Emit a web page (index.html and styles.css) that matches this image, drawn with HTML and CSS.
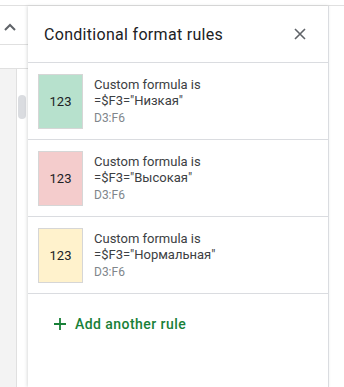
FILE: index.html
```html
<!DOCTYPE html>
<html>
<head>
	<meta charset="utf-8">
	<link rel="stylesheet" href="styles.css">
</head>
<body>

	<div class="topbar"></div>

	<div class="main">
		<div class="gutter">
			<div class="gutter-head">
				<svg class="chevron" width="12" height="8" viewBox="0 0 12 8">
					<path d="M1 7L6 2l5 5" fill="none" stroke="#5f6368" stroke-width="2"/>
				</svg>
			</div>
			<div class="gutter-row"></div>
			<div class="gutter-body">
				<div class="cells"></div>
				<div class="scrollarea"><div class="thumb"></div></div>
			</div>
		</div>

		<div class="panel">
			<div class="panel-head">
				<span class="title">Conditional format rules</span>
				<svg class="close" width="12" height="12" viewBox="0 0 12 12">
					<path d="M1 1l10 10M11 1L1 11" stroke="#5f6368" stroke-width="1.6"/>
				</svg>
			</div>

			<div class="rule">
				<div class="swatch green">123</div>
				<div class="rule-text">
					<div class="formula">Custom formula is</div>
					<div class="formula">=$F3="Низкая"</div>
					<div class="range">D3:F6</div>
				</div>
			</div>

			<div class="rule">
				<div class="swatch red">123</div>
				<div class="rule-text">
					<div class="formula">Custom formula is</div>
					<div class="formula">=$F3="Высокая"</div>
					<div class="range">D3:F6</div>
				</div>
			</div>

			<div class="rule">
				<div class="swatch yellow">123</div>
				<div class="rule-text">
					<div class="formula">Custom formula is</div>
					<div class="formula">=$F3="Нормальная"</div>
					<div class="range">D3:F6</div>
				</div>
			</div>

			<a class="addrule" href="#">
				<svg width="12" height="12" viewBox="0 0 12 12">
					<path d="M6 0v12M0 6h12" stroke="#188038" stroke-width="1.8"/>
				</svg>
				<span>Add another rule</span>
			</a>
		</div>

		<div class="rightside"></div>
	</div>

</body>
</html>
```

FILE: styles.css
```css
html, body {
	margin: 0px;
	padding: 0px;
	height: 100%;
	background: white;
	font-family: Roboto, "Liberation Sans", sans-serif;
	color: #202124;
	overflow: hidden;
}

.topbar {
	height: 5px;
	border-bottom: 1px solid #e0e0e0;
}

.main {
	display: flex;
	height: 381px;
}

/* sheet strip on the left, behind the panel */
.gutter {
	width: 28px;
	display: flex;
	flex-direction: column;
}

.gutter-head {
	height: 38px;
	border-bottom: 1px solid #e0e0e0;
	padding-left: 4px;
	display: flex;
	align-items: center;
}

.chevron {
	margin-top: 4px;
}

.gutter-row {
	height: 23px;
	border-bottom: 1px solid #e0e0e0;
}

.gutter-body {
	flex: 1;
	display: flex;
}

.gutter-body .cells {
	width: 16px;
	background: #f3f3f3;
	border-right: 1px solid #e0e0e0;
}

.scrollarea {
	flex: 1;
	padding: 26px 1px 0px 1px;
}

.thumb {
	width: 8px;
	height: 24px;
	border-radius: 4px;
	background: #dadce0;
}

/* side panel */
.panel {
	width: 300px;
	border-right: 1px solid #dadce0;
	background: white;
	box-shadow: -1px 0px 3px rgba(60, 64, 67, 0.18);
	position: relative;
	z-index: 1;
}

.panel-head {
	height: 56px;
	border-bottom: 1px solid #dadce0;
	display: flex;
	align-items: center;
	justify-content: space-between;
	padding: 0px 22px 0px 16px;
}

.title {
	font-size: 16px;
	letter-spacing: 0.3px;
	color: #202124;
	margin-top: 1px;
}

.rule {
	height: 76px;
	border-bottom: 1px solid #dadce0;
	display: flex;
	align-items: center;
	padding: 0px 10px;
}

.swatch {
	width: 43px;
	height: 53px;
	border: 1px solid #d6d6d6;
	display: flex;
	align-items: center;
	justify-content: center;
	font-size: 13px;
	color: #202124;
	margin-right: 11px;
	flex-shrink: 0;
}

.green { background: #b7e1cd; }
.red { background: #f4cccc; }
.yellow { background: #fff2cc; }

.rule-text {
	font-size: 13px;
	color: #3c4043;
}

.formula {
	line-height: 16px;
}

.range {
	font-size: 12px;
	line-height: 16px;
	margin-top: 1px;
	color: #80868b;
}

.addrule {
	display: flex;
	align-items: center;
	margin: 20px 0px 0px 26px;
	height: 20px;
	text-decoration: none;
	color: #188038;
	font-size: 14px;
	font-weight: 500;
	letter-spacing: 0.45px;
}

.addrule svg {
	margin-right: 9px;
}

.rightside {
	flex: 1;
}
```
